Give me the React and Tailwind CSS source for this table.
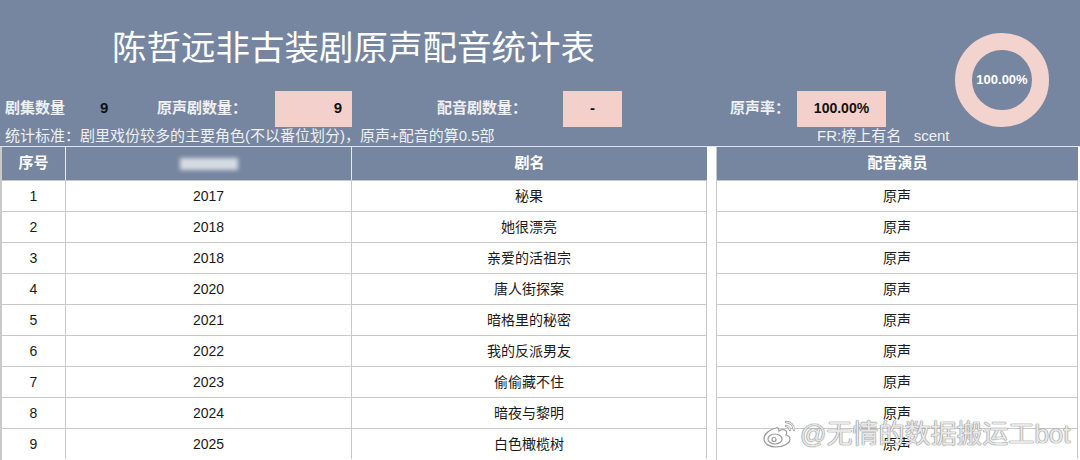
const ROWS = [
  { no: 1, year: "2017", name: "秘果", voice: "原声" },
  { no: 2, year: "2018", name: "她很漂亮", voice: "原声" },
  { no: 3, year: "2018", name: "亲爱的活祖宗", voice: "原声" },
  { no: 4, year: "2020", name: "唐人街探案", voice: "原声" },
  { no: 5, year: "2021", name: "暗格里的秘密", voice: "原声" },
  { no: 6, year: "2022", name: "我的反派男友", voice: "原声" },
  { no: 7, year: "2023", name: "偷偷藏不住", voice: "原声" },
  { no: 8, year: "2024", name: "暗夜与黎明", voice: "原声" },
  { no: 9, year: "2025", name: "白色橄榄树", voice: "原声" },
];

function Donut() {
  return (
    <div className="relative h-[94px] w-[94px]">
      <svg width="94" height="94" viewBox="0 0 94 94">
        <circle cx="47" cy="47" r="38.5" fill="none" stroke="#f3d3ce" strokeWidth="17" />
      </svg>
      <span className="absolute inset-0 flex items-center justify-center text-[13px] font-bold text-white">
        100.00%
      </span>
    </div>
  );
}

function WeiboLogo() {
  return (
    <svg width="34" height="30" viewBox="0 0 34 30" fill="none">
      <path
        d="M14 9c-6 1-12 6-12 11 0 5 6 8 12 8 8 0 14-4 14-8 0-3-3-4-4-4 1-2 1-4-1-5-2-1-5 0-6 1 0-2-1-4-3-3z"
        fill="rgba(255,255,255,0.75)"
        stroke="#9a9a9a"
        strokeWidth="1.2"
      />
      <ellipse cx="13" cy="20" rx="7" ry="5" fill="none" stroke="#9a9a9a" strokeWidth="1.2" />
      <circle cx="12" cy="20.5" r="2" fill="none" stroke="#9a9a9a" strokeWidth="1.2" />
      <path d="M24 3c4 0 8 3 8 8" stroke="#9a9a9a" strokeWidth="2.4" strokeLinecap="round" />
      <path d="M24 3c4 0 8 3 8 8" stroke="rgba(255,255,255,0.85)" strokeWidth="1.2" strokeLinecap="round" />
      <path d="M24 7c2 0 4 2 4 4" stroke="#9a9a9a" strokeWidth="2.4" strokeLinecap="round" />
      <path d="M24 7c2 0 4 2 4 4" stroke="rgba(255,255,255,0.85)" strokeWidth="1.2" strokeLinecap="round" />
    </svg>
  );
}

export default function App() {
  return (
    <div
      className="relative flex h-[460px] w-[1080px] flex-col overflow-hidden bg-white"
      style={{ fontFamily: '"Liberation Sans", "Noto Sans CJK SC", sans-serif' }}
    >
      {/* Top band */}
      <div className="flex h-[147px] shrink-0 border-b border-[#dfe4ec] bg-[#7686a0]">
        <div className="flex w-[950px] flex-col">
          <div className="flex h-[91px] items-center pl-[112px] pt-[8px] text-[34.5px] text-white">
            陈哲远非古装剧原声配音统计表
          </div>
          <div className="flex h-[37px] items-center text-[15px] font-bold text-[#eef0f4]">
            <span className="w-[100px] pl-[5px]">剧集数量</span>
            <span className="w-[57px] text-[#111]">9</span>
            <span className="w-[118px]">原声剧数量：</span>
            <span className="flex h-[36px] w-[77px] items-center justify-end bg-[#f3d0cb] pr-[10px] text-[#111]">9</span>
            <span className="w-[85px]" />
            <span className="w-[126px]">配音剧数量：</span>
            <span className="flex h-[36px] w-[59px] items-center justify-center bg-[#f3d0cb] text-[#111]">-</span>
            <span className="w-[108px]" />
            <span className="w-[67px]">原声率：</span>
            <span className="flex h-[36px] w-[89px] items-center justify-center bg-[#f3d0cb] text-[14px] text-[#111]">100.00%</span>
          </div>
          <div className="flex h-[19px] items-center text-[15px] text-[#eef0f4]">
            <span className="w-[817px] pl-[5px]">统计标准：剧里戏份较多的主要角色(不以番位划分)，原声+配音的算0.5部</span>
            <span className="whitespace-pre">FR:榜上有名   scent</span>
          </div>
        </div>
        <div className="pl-[5px] pt-[33px]">
          <Donut />
        </div>
      </div>

      {/* Tables */}
      <div className="flex flex-1 text-[14px] text-[#1a1a1a]">
        <div className="w-[707px] border-l-2 border-[#c9c9c9]">
          <div className="flex h-[33px] bg-[#7686a0] text-[15px] font-bold text-white">
            <div className="flex w-[64px] items-center justify-center border-r border-[#e6e9ef]">序号</div>
            <div className="flex w-[286px] items-center justify-center border-r border-[#e6e9ef]">
              <div className="h-[12px] w-[58px] bg-white/70 blur-[2px]" />
            </div>
            <div className="flex flex-1 items-center justify-center">剧名</div>
          </div>
          {ROWS.map((r) => (
            <div key={r.no} className="flex h-[31px] border-t border-[#c9c9c9]">
              <div className="flex w-[64px] items-center justify-center border-r border-[#c9c9c9]">{r.no}</div>
              <div className="flex w-[286px] items-center justify-center border-r border-[#c9c9c9]">{r.year}</div>
              <div className="flex flex-1 items-center justify-center border-r border-[#c9c9c9]">{r.name}</div>
            </div>
          ))}
        </div>
        <div className="w-[9px]" />
        <div className="w-[362px] border-l border-[#c9c9c9]">
          <div className="flex h-[33px] items-center justify-center bg-[#7686a0] text-[15px] font-bold text-white">
            配音演员
          </div>
          {ROWS.map((r) => (
            <div
              key={r.no}
              className="flex h-[31px] items-center justify-center border-t border-r border-[#c9c9c9]"
            >
              {r.voice}
            </div>
          ))}
        </div>
      </div>

      {/* Watermark */}
      <div className="absolute left-[762px] top-[419px] flex items-center gap-[4px] whitespace-nowrap">
        <WeiboLogo />
        <span className="text-[26px] leading-none text-white/80 [text-shadow:0_0_1px_#888,0_0_1px_#888,0_0_1px_#888]">
          @无情的数据搬运工bot
        </span>
      </div>
    </div>
  );
}
